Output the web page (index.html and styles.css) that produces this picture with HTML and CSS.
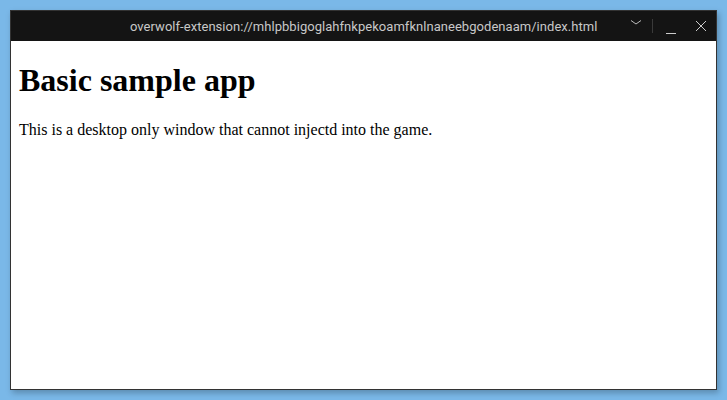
FILE: index.html
```html
<!DOCTYPE html>
<html>
<head>
<meta charset="utf-8">
<link rel="stylesheet" href="styles.css">
</head>
<body>
<div class="window">
  <div class="titlebar">
    <div class="title">overwolf-extension://mhlpbbigoglahfnkpekoamfknlnaneebgodenaam/index.html</div>
    <div class="controls">
      <svg class="btn chev" width="12" height="8" viewBox="0 0 12 8"><path d="M1 1.5 L6 5 L11 1.5" fill="none" stroke="#bbb" stroke-width="1"/></svg>
      <span class="sep"></span>
      <svg class="btn min" width="12" height="12" viewBox="0 0 12 12"><path d="M1 11.5 H11" stroke="#ccc" stroke-width="1"/></svg>
      <svg class="btn close" width="12" height="12" viewBox="0 0 12 12"><path d="M1 1 L11 11 M11 1 L1 11" stroke="#ccc" stroke-width="1"/></svg>
    </div>
  </div>
  <div class="content">
    <h1>Basic sample app</h1>
    <p>This is a desktop only window that cannot injectd into the game.</p>
  </div>
</div>
</body>
</html>
```

FILE: styles.css
```css
html, body {
  margin: 0;
  height: 100%;
}
body {
  background: #7ab8e8;
  padding: 10px 10px 10px 10px;
  box-sizing: border-box;
}
.window {
  width: 707px;
  height: 380px;
  border: 1px solid #333;
  box-sizing: border-box;
  display: flex;
  flex-direction: column;
  background: #fff;
  box-shadow: 2px 3px 6px rgba(0,0,0,0.25);
}
.titlebar {
  height: 30px;
  flex: none;
  background: #141414;
  display: flex;
  align-items: center;
  position: relative;
}
.title {
  font-family: "Roboto", "Liberation Sans", sans-serif;
  font-size: 13px;
  color: #c8c8c8;
  padding-left: 119px;
  letter-spacing: 0.04px;
  white-space: nowrap;
}
.controls {
  margin-left: auto;
  display: flex;
  align-items: center;
  height: 100%;
  padding-right: 9px;
}
.chev { margin-right: 10px; margin-top: -6px; }
.sep {
  width: 1px;
  height: 14px;
  background: #3a3a3a;
  margin-right: 12px;
}
.min { margin-right: 18px; margin-top: 4px; }
.close { margin-top: 0; }
.content {
  flex: 1;
  padding: 8px;
  font-family: "Liberation Serif", serif;
  color: #000;
}
.content h1 {
  font-size: 32px;
  font-weight: bold;
  margin: 13px 0 22px 0;
}
.content p {
  font-size: 16px;
  margin: 0;
}
```
